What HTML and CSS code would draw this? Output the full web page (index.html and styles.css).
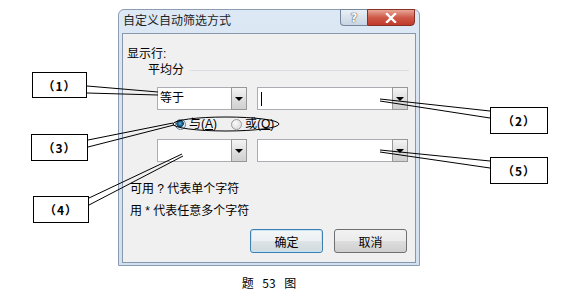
FILE: index.html
```html
<!DOCTYPE html>
<html lang="zh-CN">
<head>
  <meta charset="UTF-8" />
  <title>题 53 图</title>
  <link rel="stylesheet" href="styles.css">
</head>
<body>

  <div class="dialog">
    <div class="titlebar">
      <span class="title">自定义自动筛选方式</span>
      <div class="cap-buttons">
        <span class="cap-btn help">?</span>
        <span class="cap-btn close">
          <svg width="12" height="10" viewBox="0 0 12 10">
            <path d="M2 1 L10 9 M10 1 L2 9" stroke="#fff" stroke-width="2.4" stroke-linecap="square"/>
          </svg>
        </span>
      </div>
    </div>

    <div class="client">
      <div class="label">显示行:</div>
      <div class="field-row">
        <span>平均分</span>
        <span class="rule"></span>
      </div>

      <div class="combo-row">
        <div class="combo small"><span class="value">等于</span><span class="drop"></span></div>
        <div class="combo wide"><span class="value"><span class="caret"></span></span><span class="drop"></span></div>
      </div>

      <div class="radio-row">
        <span class="radio checked"><span class="dot"></span><span>与(<u>A</u>)</span></span>
        <span class="radio"><span class="dot"></span><span>或(<u>O</u>)</span></span>
      </div>

      <div class="combo-row second">
        <div class="combo small"><span class="value"></span><span class="drop"></span></div>
        <div class="combo wide"><span class="value"></span><span class="drop"></span></div>
      </div>

      <div class="hints">
        <div>可用 ? 代表单个字符</div>
        <div>用 * 代表任意多个字符</div>
      </div>

      <div class="button-row">
        <button class="btn default">确定</button>
        <button class="btn">取消</button>
      </div>
    </div>
  </div>

  <div class="fig-caption">题 53 图</div>

  <!-- callout lines -->
  <svg class="leaders" width="578" height="295" viewBox="0 0 578 295">
    <g stroke="#000" stroke-width="1" fill="none">
      <line x1="87" y1="86" x2="158" y2="92"/>
      <line x1="87" y1="93" x2="158" y2="95"/>

      <line x1="380" y1="99" x2="490" y2="111"/>
      <line x1="380" y1="101" x2="490" y2="118"/>

      <line x1="88" y1="140" x2="173" y2="123"/>
      <line x1="88" y1="147" x2="174" y2="125"/>
      <ellipse cx="226" cy="124" rx="53" ry="7"/>

      <line x1="89" y1="198" x2="182" y2="154"/>
      <line x1="89" y1="205" x2="183" y2="156"/>

      <line x1="380" y1="150" x2="490" y2="161"/>
      <line x1="380" y1="152" x2="490" y2="168"/>
    </g>
  </svg>

  <div class="callout c1">（1）</div>
  <div class="callout c2">（2）</div>
  <div class="callout c3">（3）</div>
  <div class="callout c4">（4）</div>
  <div class="callout c5">（5）</div>

</body>
</html>
```

FILE: styles.css
```css
body {
  margin: 0;
  width: 578px;
  height: 295px;
  position: relative;
  overflow: hidden;
  background: #fff;
  font-family: "Noto Sans CJK SC", sans-serif;
  font-size: 12px;
  color: #000;
}

.dialog {
  margin: 9px 0 0 118px;
  width: 302px;
  height: 257px;
  box-sizing: border-box;
  border: 1px solid #8c9db3;
  border-radius: 6px 6px 0 0;
  background: linear-gradient(#dde8f5, #d3e0ee);
  padding: 0 3px 2px 3px;
  display: flex;
  flex-direction: column;
  font-family: "Liberation Sans", "Noto Sans CJK SC", sans-serif;
}

.titlebar {
  height: 23px;
  display: flex;
  justify-content: space-between;
  align-items: flex-start;
}

.title {
  padding-left: 1px;
  line-height: 22px;
  color: #1e1e1e;
}

.cap-buttons {
  display: flex;
  margin-top: -1px;
  margin-right: 1px;
}

.cap-btn {
  height: 17px;
  box-sizing: border-box;
  display: flex;
  align-items: center;
  justify-content: center;
}

.help {
  width: 27px;
  border: 1px solid #76879d;
  border-right: none;
  border-radius: 0 0 0 4px;
  background: linear-gradient(#e9eff6, #c8d4e2);
  color: #fff;
  font-family: "DejaVu Sans", sans-serif;
  font-weight: bold;
  font-size: 12px;
  text-shadow: 0 0 1px #333, 0 0 1px #333;
}

.close {
  width: 48px;
  border: 1px solid #8a2f25;
  border-radius: 0 0 4px 0;
  background: linear-gradient(#e8a798, #cf5a49 50%, #c0392a);
}

.client {
  height: 230px;
  box-sizing: border-box;
  border: 1px solid #8798ae;
  background: #f0f0f0;
  display: flex;
  flex-direction: column;
}

.label {
  margin-top: 12px;
  padding-left: 4px;
  line-height: 16px;
}

.field-row {
  display: flex;
  align-items: center;
  padding-left: 25px;
  line-height: 16px;
}

.rule {
  flex: 1;
  height: 1px;
  background: #dadde2;
  margin: 0 6px 0 6px;
}

.combo-row {
  display: flex;
  gap: 10px;
  margin-top: 9px;
  padding-left: 34px;
}

.combo-row.second {
  margin-top: 7px;
}

.combo {
  height: 23px;
  box-sizing: border-box;
  border: 1px solid #abadb3;
  background: #fff;
  display: flex;
}

.combo.small {
  width: 90px;
}

.combo.wide {
  width: 151px;
}

.value {
  flex: 1;
  padding-left: 2px;
  line-height: 21px;
  display: flex;
  align-items: center;
}

.caret {
  width: 1px;
  height: 14px;
  margin-left: 1px;
  background: #000;
}

.drop {
  width: 16px;
  margin: -1px -1px -1px 0;
  box-sizing: border-box;
  border: 1px solid #979797;
  background: linear-gradient(#f4f4f4, #dcdcdc 60%, #d0d0d0);
  display: flex;
  align-items: center;
  justify-content: center;
}

.drop::after {
  content: "";
  border-left: 4px solid transparent;
  border-right: 4px solid transparent;
  border-top: 4px solid #000;
}

.radio-row {
  display: flex;
  gap: 14px;
  margin-top: 6px;
  padding-left: 52px;
  line-height: 16px;
}

.radio {
  display: flex;
  align-items: center;
  gap: 3px;
}

.dot {
  width: 11px;
  height: 11px;
  box-sizing: border-box;
  border-radius: 50%;
  border: 1px solid #9a9a9a;
  background: radial-gradient(circle at 40% 35%, #fafafa, #d6d6d6);
}

.radio.checked .dot {
  border-color: #6c8193;
  background: radial-gradient(circle at 45% 40%, #6fb3d8 0, #1e6a97 2px, #0f4465 3.5px, #e6eef3 4px);
}

.hints {
  margin-top: 16px;
  padding-left: 7px;
  line-height: 22px;
}

.button-row {
  display: flex;
  justify-content: flex-end;
  gap: 11px;
  margin-top: 7px;
  padding-right: 8px;
}

.btn {
  width: 73px;
  height: 24px;
  box-sizing: border-box;
  border: 1px solid #707070;
  border-radius: 3px;
  background: linear-gradient(#f2f2f2, #ebebeb 50%, #dddddd 51%, #cfcfcf);
  font-family: inherit;
  font-size: 12px;
  color: #000;
  padding: 0;
}

.btn.default {
  border-color: #3c7fb1;
  box-shadow: inset 0 0 0 1px #c4e5f6;
  background: linear-gradient(#f4f6f7, #ecf0f2 50%, #dde3e7 51%, #d2dade);
}

.fig-caption {
  margin: 9px 0 0 118px;
  width: 302px;
  text-align: center;
  line-height: 16px;
  word-spacing: 6px;
}

.leaders {
  position: absolute;
  left: 0;
  top: 0;
  pointer-events: none;
}

.callout {
  position: absolute;
  box-sizing: border-box;
  border: 1px solid #000;
  background: #fff;
  display: flex;
  align-items: center;
  justify-content: center;
  font-size: 12px;
  font-weight: bold;
  letter-spacing: 1px;
}

.c1 { left: 32px; top: 72px; width: 55px; height: 26px; }
.c2 { left: 490px; top: 107px; width: 58px; height: 27px; }
.c3 { left: 31px; top: 134px; width: 57px; height: 27px; }
.c4 { left: 33px; top: 196px; width: 56px; height: 27px; }
.c5 { left: 490px; top: 157px; width: 58px; height: 27px; }
```
